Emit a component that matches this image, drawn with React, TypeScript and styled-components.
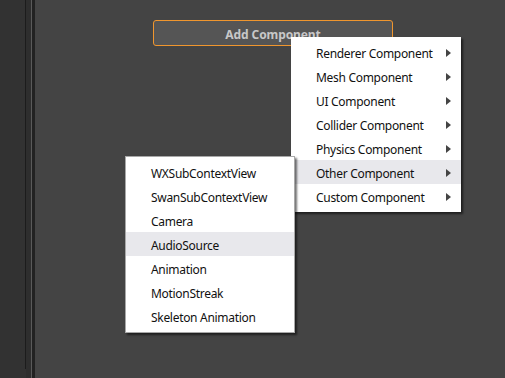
import React from "react";
import styled, { createGlobalStyle } from "styled-components";

const Global = createGlobalStyle`
  html, body, #root { margin: 0; padding: 0; height: 100%; }
  body { background: #444444; overflow: hidden; font-family: "Noto Sans", "Open Sans", sans-serif; }
`;

const Page = styled.div`
  position: relative;
  display: flex;
  width: 505px;
  height: 378px;
  background: #444444;
`;

const SidePanel = styled.div`
  width: 26px;
  background: #323232;
  display: flex;
  flex-direction: column;
`;

const SideEdge = styled.div`
  height: 369px;
  border-right: 1px solid #1c1c1c;
`;

const Splitter = styled.div`
  width: 9px;
  display: flex;
`;

const SplitPart = styled.div<{ $w: number; $c: string }>`
  width: ${(p) => p.$w}px;
  background: ${(p) => p.$c};
`;

const Main = styled.div`
  flex: 1;
  background: #444444;
  padding: 20px 0 0 118px;
`;

const AddButton = styled.button`
  box-sizing: border-box;
  width: 240px;
  height: 26px;
  border: 1px solid #f0962e;
  border-radius: 3px;
  background: #555555;
  color: #c8c8c8;
  font-family: "Noto Sans", "Open Sans", sans-serif;
  font-weight: 700;
  font-size: 12px;
  letter-spacing: -0.1px;
  display: flex;
  align-items: center;
  justify-content: center;
  padding: 2px 0 0;
`;

const Menu = styled.div<{ $left: number; $top: number; $w: number; $border: boolean }>`
  position: absolute;
  left: ${(p) => p.$left}px;
  top: ${(p) => p.$top}px;
  width: ${(p) => p.$w}px;
  box-sizing: border-box;
  background: #ffffff;
  padding: 3px 0 4px;
  border: ${(p) => (p.$border ? "1px solid #a8a8a8" : "none")};
  box-shadow: 2px 2px 2px rgba(0, 0, 0, 0.55);
  display: flex;
  flex-direction: column;
`;

const Item = styled.div<{ $active?: boolean }>`
  height: 24px;
  display: flex;
  align-items: center;
  justify-content: space-between;
  padding: 0 10px 0 25px;
  background: ${(p) => (p.$active ? "#e8e8ec" : "transparent")};
  color: #111111;
  font-size: 12px;
  letter-spacing: -0.3px;
  white-space: nowrap;
`;

const Label = styled.span`
  line-height: 20px;
  margin-top: 4px;
`;

const ArrowIcon = styled.svg`
  margin-top: 1px;
`;

const Arrow = () => (
  <ArrowIcon width="5" height="8" viewBox="0 0 5 8">
    <polygon points="0,0 5,4 0,8" fill="#444" />
  </ArrowIcon>
);

const mainItems = [
  "Renderer Component",
  "Mesh Component",
  "UI Component",
  "Collider Component",
  "Physics Component",
  "Other Component",
  "Custom Component",
];

const subItems = [
  "WXSubContextView",
  "SwanSubContextView",
  "Camera",
  "AudioSource",
  "Animation",
  "MotionStreak",
  "Skeleton Animation",
];

export default function App() {
  return (
    <Page>
      <Global />
      <SidePanel>
        <SideEdge />
      </SidePanel>
      <Splitter>
        <SplitPart $w={5} $c="#2e2e2e" />
        <SplitPart $w={1} $c="#5a5a5a" />
        <SplitPart $w={3} $c="#222222" />
      </Splitter>
      <Main>
        <AddButton>Add Component</AddButton>
      </Main>
      <Menu $left={291} $top={37} $w={170} $border={false}>
        {mainItems.map((t) => (
          <Item key={t} $active={t === "Other Component"}>
            <Label>{t}</Label>
            <Arrow />
          </Item>
        ))}
      </Menu>
      <Menu $left={125} $top={156} $w={170} $border={true}>
        {subItems.map((t) => (
          <Item key={t} $active={t === "AudioSource"}>
            <Label>{t}</Label>
          </Item>
        ))}
      </Menu>
    </Page>
  );
}
